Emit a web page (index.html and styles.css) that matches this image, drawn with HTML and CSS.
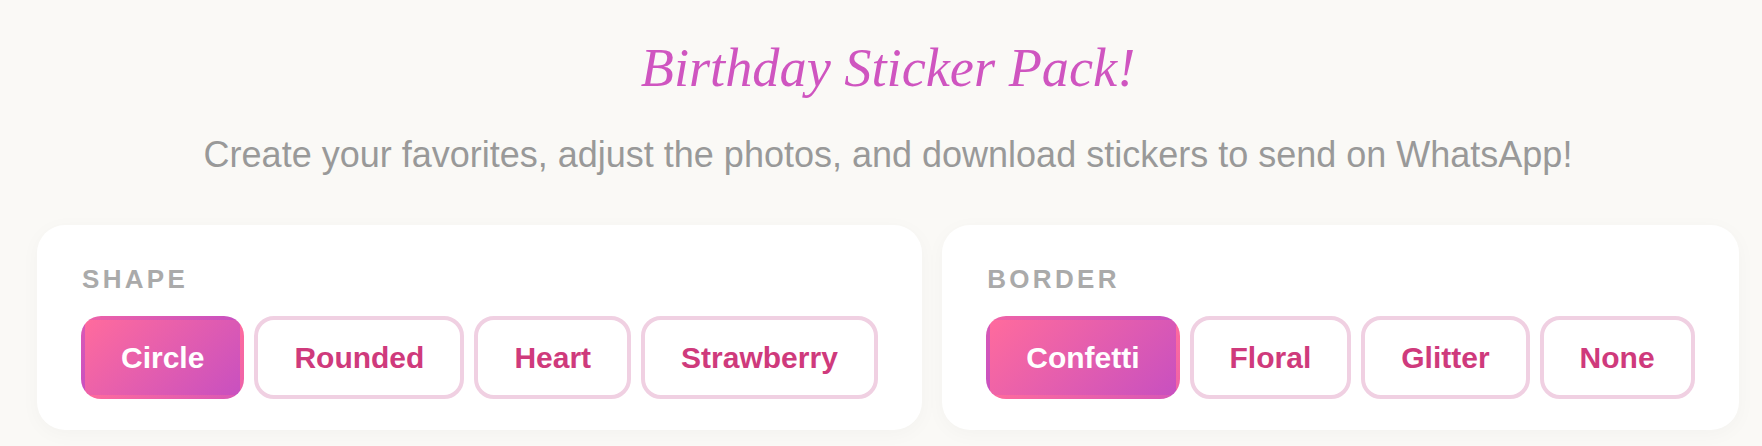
FILE: index.html
```html
<!DOCTYPE html>
<html lang="en">
<head>
<meta charset="utf-8">
<title>Birthday Sticker Pack!</title>
<link rel="stylesheet" href="styles.css">
</head>
<body>
<header class="intro">
  <h1 class="title">Birthday Sticker Pack!</h1>
  <p class="subtitle">Create your favorites, adjust the photos, and download stickers to send on WhatsApp!</p>
</header>
<main class="panels">
  <section class="card">
    <h2 class="label">SHAPE</h2>
    <div class="options">
      <button class="opt active">Circle</button>
      <button class="opt">Rounded</button>
      <button class="opt">Heart</button>
      <button class="opt">Strawberry</button>
    </div>
  </section>
  <section class="card">
    <h2 class="label">BORDER</h2>
    <div class="options">
      <button class="opt active">Confetti</button>
      <button class="opt">Floral</button>
      <button class="opt">Glitter</button>
      <button class="opt">None</button>
    </div>
  </section>
</main>
</body>
</html>
```
FILE: styles.css
```css
* { box-sizing: border-box; }
html, body { margin: 0; height: 100%; }
body {
  background: #faf9f6;
  font-family: "Liberation Sans", Arial, sans-serif;
  overflow: hidden;
  padding: 0 23px 0 37px;
}
.intro { text-align: center; padding-top: 30px; }
.title {
  margin: 0;
  font-family: "Liberation Serif", serif;
  font-style: italic;
  font-weight: 400;
  font-size: 54.3px;
  line-height: 76px;
  color: #cf55c0;
}
.subtitle {
  margin: 27px 0 0;
  font-size: 36px;
  line-height: 44px;
  color: #999;
}
.panels { display: flex; gap: 20px; margin-top: 48px; }
.card {
  flex: 1 1 auto;
  background: #fff;
  border-radius: 28px;
  padding: 36px 44px 31px;
  box-shadow: 0 4px 20px rgba(0, 0, 0, 0.03);
}
.label {
  margin: 0 0 18px 1px;
  font-size: 26px;
  line-height: 37px;
  font-weight: 700;
  letter-spacing: 3.3px;
  color: #aaa;
}
.options { display: flex; gap: 10px; }
.opt {
  height: 83px;
  padding: 0 36px;
  border: 4px solid #f0d0e2;
  border-radius: 20px;
  background: #fff;
  color: #cf3a7c;
  font: 700 30px "Liberation Sans", Arial, sans-serif;
}
.opt.active {
  border-color: transparent;
  background: linear-gradient(135deg, #ff6b9d, #c850c0);
  color: #fff;
}
```
